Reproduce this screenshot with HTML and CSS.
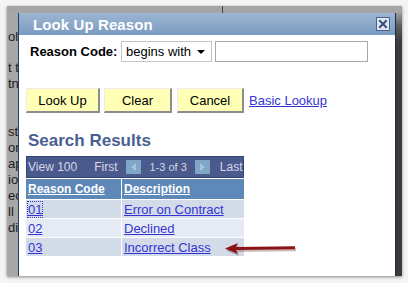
FILE: index.html
```html
<!DOCTYPE html>
<html lang="en">
<head>
    <meta charset="UTF-8">
    <title>Look Up Reason</title>
    <link rel="stylesheet" href="styles.css">
</head>
<body>
    <div class="frame">
        <div class="shot">
            <div class="page-top"><span class="page-line"></span></div>
            <div class="page-left">
                <p>ol</p>
                <p class="gap-sm">t t</p>
                <p>tn</p>
                <p class="gap-lg">st</p>
                <p>on</p>
                <p>ap</p>
                <p>ioi</p>
                <p>ec</p>
                <p>ll r</p>
                <p>dit</p>
            </div>
            <div class="dialog">
                <div class="title-bar">
                    <span class="title">Look Up Reason</span>
                    <span class="close">
                        <svg width="14" height="14" viewBox="0 0 14 14">
                            <path d="M3.5,3.5 L10.5,10.5 M10.5,3.5 L3.5,10.5" stroke="#3a4f78" stroke-width="2.4" stroke-linecap="square"/>
                        </svg>
                    </span>
                </div>
                <div class="body">
                    <div class="search-row">
                        <label>Reason Code:</label>
                        <div class="select">begins with <span class="caret"></span></div>
                        <div class="input"></div>
                    </div>
                    <div class="button-row">
                        <span class="btn btn-lookup">Look Up</span>
                        <span class="btn btn-clear">Clear</span>
                        <span class="btn btn-cancel">Cancel</span>
                        <a class="basic" href="#">Basic Lookup</a>
                    </div>
                    <h2>Search Results</h2>
                    <div class="results">
                        <div class="nav">
                            <span>View 100</span>
                            <span class="first">First</span>
                            <span class="arrow-btn"><span class="tri tri-left"></span></span>
                            <span class="count">1-3 of 3</span>
                            <span class="arrow-btn"><span class="tri tri-right"></span></span>
                            <span class="last">Last</span>
                        </div>
                        <table>
                            <tr>
                                <th class="col-code"><a href="#">Reason Code</a></th>
                                <th><a href="#">Description</a></th>
                            </tr>
                            <tr class="odd">
                                <td><a href="#" class="focused">01</a></td>
                                <td><a href="#">Error on Contract</a></td>
                            </tr>
                            <tr class="even">
                                <td><a href="#">02</a></td>
                                <td><a href="#">Declined</a></td>
                            </tr>
                            <tr class="odd">
                                <td><a href="#">03</a></td>
                                <td><a href="#">Incorrect Class</a></td>
                            </tr>
                        </table>
                        <svg class="pointer" width="80" height="16" viewBox="0 0 80 16">
                            <path d="M2,8.5 L15,3 L13,7 L72,6.2 L72,9.2 L13,10 L15,14 Z" fill="#5a1a1a" fill-opacity="0.3" transform="translate(1,2)"/>
                            <path d="M2,8.5 L15,3 L13,7 L72,6.2 L72,9.2 L13,10 L15,14 Z" fill="#8c1214"/>
                        </svg>
                    </div>
                </div>
            </div>
            <div class="page-right"></div>
        </div>
    </div>
</body>
</html>
```

FILE: styles.css
```css
html, body {
    margin: 0;
    padding: 0;
    background: #ffffff;
}

body {
    font-family: "Liberation Sans", Arial, sans-serif;
    color: #000;
}

.frame {
    width: 408px;
    height: 283px;
    box-sizing: border-box;
    padding: 6px 6px 7px 7px;
    background: #f4f4f4;
}

.shot {
    width: 395px;
    height: 270px;
    display: grid;
    grid-template-columns: 11px 1fr 7px;
    grid-template-rows: 7px 1fr;
    box-shadow: 0 1px 3px rgba(0, 0, 0, 0.45);
    background: #a6a6a6;
}

.page-top {
    grid-column: 1 / 4;
    background: #a5a5a5;
    position: relative;
}

    .page-top .page-line {
        position: absolute;
        left: 215px;
        top: 0;
        width: 1px;
        height: 7px;
        background: #3c4660;
    }

.page-left {
    background: #a7a7a7;
    overflow: hidden;
    white-space: nowrap;
    font-size: 13px;
    line-height: 16px;
    color: #1a1a1a;
    padding-top: 16px;
}

    .page-left p {
        margin: 0;
        padding-left: 1px;
        height: 16px;
    }

    .page-left .gap-sm {
        margin-top: 15px;
    }

    .page-left .gap-lg {
        margin-top: 32px;
    }

.page-right {
    background: linear-gradient(to bottom, #9a9a9a 0, #5a5a5a 14px, #3b3b3b 30px, #3a3a3a 100%);
    border-left: 1px solid #1c2c4c;
}

.dialog {
    background: #ffffff;
    border-left: 1px solid #24406e;
    display: flex;
    flex-direction: column;
}

.title-bar {
    height: 22px;
    background: linear-gradient(to bottom, #9cb6d2, #7a9bc1);
    display: flex;
    align-items: center;
    justify-content: space-between;
    padding: 0 5px 0 14px;
}

    .title-bar .title {
        color: #ffffff;
        font-weight: bold;
        font-size: 15px;
        letter-spacing: 0.1px;
    }

    .title-bar .close {
        width: 12px;
        height: 12px;
        border: 1px solid #4a6287;
        background: #dfe7f2;
        display: flex;
        align-items: center;
        justify-content: center;
    }

        .title-bar .close svg {
            width: 12px;
            height: 12px;
        }

.body {
    padding: 6px 0 0 7px;
    position: relative;
}

.search-row {
    display: flex;
    align-items: center;
    height: 21px;
}

    .search-row label {
        font-weight: bold;
        font-size: 13px;
        margin-left: 4px;
        width: 91px;
        flex-shrink: 0;
        white-space: nowrap;
    }

    .search-row .select {
        box-sizing: border-box;
        width: 91px;
        height: 21px;
        border: 1px solid #c4c4c4;
        font-size: 13px;
        line-height: 19px;
        padding-left: 4px;
        position: relative;
        white-space: nowrap;
    }

        .search-row .select .caret {
            position: absolute;
            right: 6px;
            top: 8px;
            border-left: 4px solid transparent;
            border-right: 4px solid transparent;
            border-top: 4px solid #000;
        }

    .search-row .input {
        box-sizing: border-box;
        width: 153px;
        height: 21px;
        margin-left: 3px;
        border: 1px solid #a8a8a8;
    }

.button-row {
    display: flex;
    align-items: center;
    margin-top: 26px;
    gap: 4px;
}

.btn {
    box-sizing: border-box;
    height: 25px;
    background: #ffffb5;
    border-top: 1px solid #ececec;
    border-left: 1px solid #ececec;
    border-right: 2px solid #8c8c8c;
    border-bottom: 2px solid #8c8c8c;
    font-size: 13px;
    display: flex;
    align-items: center;
    justify-content: center;
}

.btn-lookup {
    width: 74px;
}

.btn-clear {
    width: 68px;
}

.btn-cancel {
    width: 67px;
    margin-left: 1px;
}

.basic {
    font-size: 13px;
    color: #3434d6;
    margin-left: 1px;
}

h2 {
    margin: 17px 0 0 2px;
    font-size: 17px;
    line-height: 22px;
    color: #4a5f91;
}

.results {
    position: relative;
    width: 218px;
    margin-top: 4px;
}

    .results .nav {
        box-sizing: border-box;
        height: 22px;
        background: #4b5a8d;
        border: 1px solid #33427a;
        color: #d3d8e4;
        font-size: 12px;
        display: flex;
        align-items: center;
        padding-left: 1px;
        white-space: nowrap;
        overflow: hidden;
    }

        .results .nav .first {
            margin-left: 17px;
        }

        .results .nav .count {
            font-size: 11px;
            margin: 0 8px;
        }

        .results .nav .arrow-btn {
            flex-shrink: 0;
            width: 15px;
            height: 14px;
            background: #7ea6c6;
            margin-left: 9px;
            display: flex;
            align-items: center;
            justify-content: center;
        }

        .results .nav .count + .arrow-btn {
            margin-left: 0;
        }

        .results .nav .last {
            margin-left: 10px;
        }

        .results .nav .tri {
            border-top: 4px solid transparent;
            border-bottom: 4px solid transparent;
        }

        .results .nav .tri-left {
            border-right: 5px solid #a9c3d9;
        }

        .results .nav .tri-right {
            border-left: 5px solid #a9c3d9;
        }

    .results table {
        border-collapse: collapse;
        width: 100%;
        margin-top: 1px;
        font-size: 13px;
    }

        .results table th {
            background: #5d88b7;
            text-align: left;
            height: 20px;
            padding: 0 2px;
            font-size: 12px;
            border-right: 1px solid #ffffff;
        }

            .results table th a {
                color: #ffffff;
            }

        .results table td {
            height: 18px;
            padding: 0 2px;
            border-right: 1px solid #ffffff;
            border-top: 1px solid #ffffff;
        }

        .results table th:last-child,
        .results table td:last-child {
            border-right: none;
        }

        .results table .col-code {
            width: 91px;
        }

        .results table tr.odd td {
            background: #d3dbe8;
        }

        .results table tr.even td {
            background: #e6ebf3;
        }

        .results table td a {
            color: #3434d6;
        }

        .results table a.focused {
            outline: 1px dotted #3434d6;
        }

    .results .pointer {
        position: absolute;
        left: 197px;
        top: 84px;
    }
```
